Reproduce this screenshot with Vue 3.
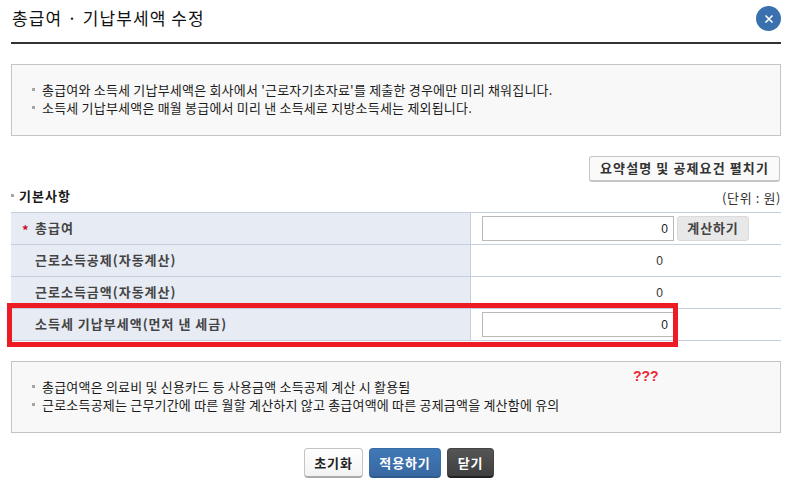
<script setup>
const notice1 = [
  "총급여와 소득세 기납부세액은 회사에서 '근로자기초자료'를 제출한 경우에만 미리 채워집니다.",
  "소득세 기납부세액은 매월 봉급에서 미리 낸 소득세로 지방소득세는 제외됩니다."
];
const notice2 = [
  "총급여액은 의료비 및 신용카드 등 사용금액 소득공제 계산 시 활용됨",
  "근로소득공제는 근무기간에 따른 월할 계산하지 않고 총급여액에 따른 공제금액을 계산함에 유의"
];
</script>

<template>
  <div class="page">
    <header class="head">
      <h1>총급여 · 기납부세액 수정</h1>
      <button class="close" aria-label="닫기">
        <svg width="10" height="10" viewBox="0 0 10 10"><path d="M1.5 1.5 8.5 8.5M8.5 1.5 1.5 8.5" stroke="#fff" stroke-width="1.6" fill="none"/></svg>
      </button>
    </header>

    <ul class="notice first">
      <li v-for="t in notice1" :key="t">{{ t }}</li>
    </ul>

    <div class="expand-row"><button class="expand">요약설명 및 공제요건 펼치기</button></div>

    <div class="sec-head">
      <h2>기본사항</h2>
      <span class="unit">(단위 : 원)</span>
    </div>

    <div class="table">
      <div class="row">
        <div class="th"><i class="star">*</i>총급여</div>
        <div class="td"><input class="num" value="0" /><button class="calc">계산하기</button></div>
      </div>
      <div class="row">
        <div class="th">근로소득공제(자동계산)</div>
        <div class="td"><span class="val">0</span></div>
      </div>
      <div class="row">
        <div class="th">근로소득금액(자동계산)</div>
        <div class="td"><span class="val">0</span></div>
      </div>
      <div class="row">
        <div class="th">소득세 기납부세액(먼저 낸 세금)</div>
        <div class="td"><input class="num" value="0" /></div>
      </div>
      <div class="highlight"></div>
    </div>

    <div class="notice-wrap">
      <ul class="notice">
        <li v-for="t in notice2" :key="t">{{ t }}</li>
      </ul>
      <span class="qqq">???</span>
    </div>

    <div class="actions">
      <button class="btn white">초기화</button>
      <button class="btn blue">적용하기</button>
      <button class="btn dark">닫기</button>
    </div>
  </div>
</template>

<style>
html, body { margin: 0; background: #fff; }
</style>

<style scoped>
.page {
  width: 786px;
  height: 486px;
  box-sizing: border-box;
  padding: 0 5px 0 11px;
  font-family: "Noto Sans CJK KR", "Noto Sans", sans-serif;
  font-size: 13px;
  color: #222;
  overflow: hidden;
}
button { font-family: inherit; padding: 0; cursor: pointer; }
.head {
  height: 42px;
  border-bottom: 2px solid #333;
  display: flex;
  align-items: flex-start;
  justify-content: space-between;
}
.head h1 {
  margin: 5px 0 0 1px;
  font-size: 17px;
  font-weight: 400;
  line-height: 26px;
  letter-spacing: 1.1px;
  color: #111;
}
.close {
  width: 25px;
  height: 25px;
  margin-top: 6px;
  border: 0;
  border-radius: 50%;
  background: #3a70ad;
  display: flex;
  align-items: center;
  justify-content: center;
}
.notice {
  margin: 0;
  height: 72px;
  box-sizing: border-box;
  padding: 16px 0 0 19px;
  list-style: none;
  border: 1px solid #c4c4c4;
  background: #f8f8f8;
  color: #1c1c1c;
  line-height: 18px;
  letter-spacing: 0.2px;
}
.notice li { position: relative; padding-left: 11px; white-space: nowrap; }
.notice li::before {
  content: "";
  position: absolute;
  left: 1px;
  top: 7px;
  width: 3px;
  height: 3px;
  background: #a5a5a5;
}
.first { margin-top: 20px; }
.expand-row { display: flex; justify-content: flex-end; margin-top: 20px; padding-right: 1px; }
.expand {
  width: 191px;
  height: 26px;
  padding-bottom: 2px;
  background: #fafafa;
  border: 1px solid #c6c6c6;
  border-bottom-width: 2px;
  border-radius: 3px;
  color: #333;
  font-size: 13px;
  font-weight: 700;
  letter-spacing: 1.1px;
}
.sec-head {
  height: 30px;
  display: flex;
  justify-content: space-between;
  align-items: center;
  position: relative;
  padding-left: 8px;
}
.sec-head::before {
  content: "";
  position: absolute;
  left: 0;
  top: 12px;
  width: 3px;
  height: 3px;
  background: #a5a5a5;
}
.sec-head h2 { margin: 0 0 4px; font-size: 13px; font-weight: 700; color: #1a1a1a; letter-spacing: 1px; }
.unit { font-size: 13px; color: #333; letter-spacing: 0.6px; }
.table { position: relative; border-top: 1px solid #c5cfdc; }
.row {
  display: flex;
  height: 32px;
  box-sizing: border-box;
  border-bottom: 1px solid #c5cfdc;
}
.th {
  width: 460px;
  box-sizing: border-box;
  background: #e7ebf4;
  border-right: 1px solid #c5cfdc;
  padding: 0 0 2px 24px;
  display: flex;
  align-items: center;
  position: relative;
  color: #444;
  font-weight: 700;
  letter-spacing: 1px;
}
.star {
  position: absolute;
  left: 11px;
  top: 10px;
  color: #c8102e;
  font-style: normal;
  font-weight: 700;
  line-height: 14px;
}
.td { flex: 1; display: flex; align-items: center; padding-left: 11px; gap: 3px; }
.num {
  width: 192px;
  height: 25px;
  box-sizing: border-box;
  border: 1px solid #b9b9b9;
  text-align: right;
  padding: 0 5px 0 0;
  font-family: "Liberation Sans", sans-serif;
  font-size: 12px;
  color: #222;
  background: #fff;
  outline: none;
}
.calc {
  width: 72px;
  height: 25px;
  padding-bottom: 2px;
  background: #e8e8e8;
  border: 1px solid #dadada;
  border-radius: 3px;
  color: #444;
  font-size: 13px;
  font-weight: 700;
  letter-spacing: 0.9px;
}
.val {
  width: 181px;
  text-align: right;
  font-family: "Liberation Sans", sans-serif;
  font-size: 12px;
  color: #333;
}
.highlight {
  position: absolute;
  left: -4px;
  top: 90px;
  width: 661px;
  height: 34px;
  border: 5px solid #ed1c24;
  pointer-events: none;
}
.notice-wrap { position: relative; margin-top: 20px; }
.qqq {
  position: absolute;
  left: 622px;
  top: 8px;
  color: #ee2a35;
  font-family: "Liberation Sans", sans-serif;
  font-size: 14px;
  font-weight: 700;
  line-height: 14px;
}
.actions { display: flex; justify-content: center; gap: 6px; margin-top: 15px; padding-left: 6px; }
.btn {
  height: 30px;
  border-radius: 4px;
  font-size: 13px;
  font-weight: 700;
  letter-spacing: 0.9px;
}
.white { width: 59px; background: linear-gradient(#fff, #f3f3f3); border: 1px solid #c4c4c4; border-bottom: 2px solid #aaa; color: #222; }
.blue { width: 72px; background: linear-gradient(#3f78b6, #3868a2); border: 1px solid #3a6da8; border-bottom: 2px solid #2f5a8e; color: #fff; }
.dark { width: 47px; background: linear-gradient(#555, #3f3f3f); border: 1px solid #444; border-bottom: 2px solid #222; color: #fff; }
</style>
